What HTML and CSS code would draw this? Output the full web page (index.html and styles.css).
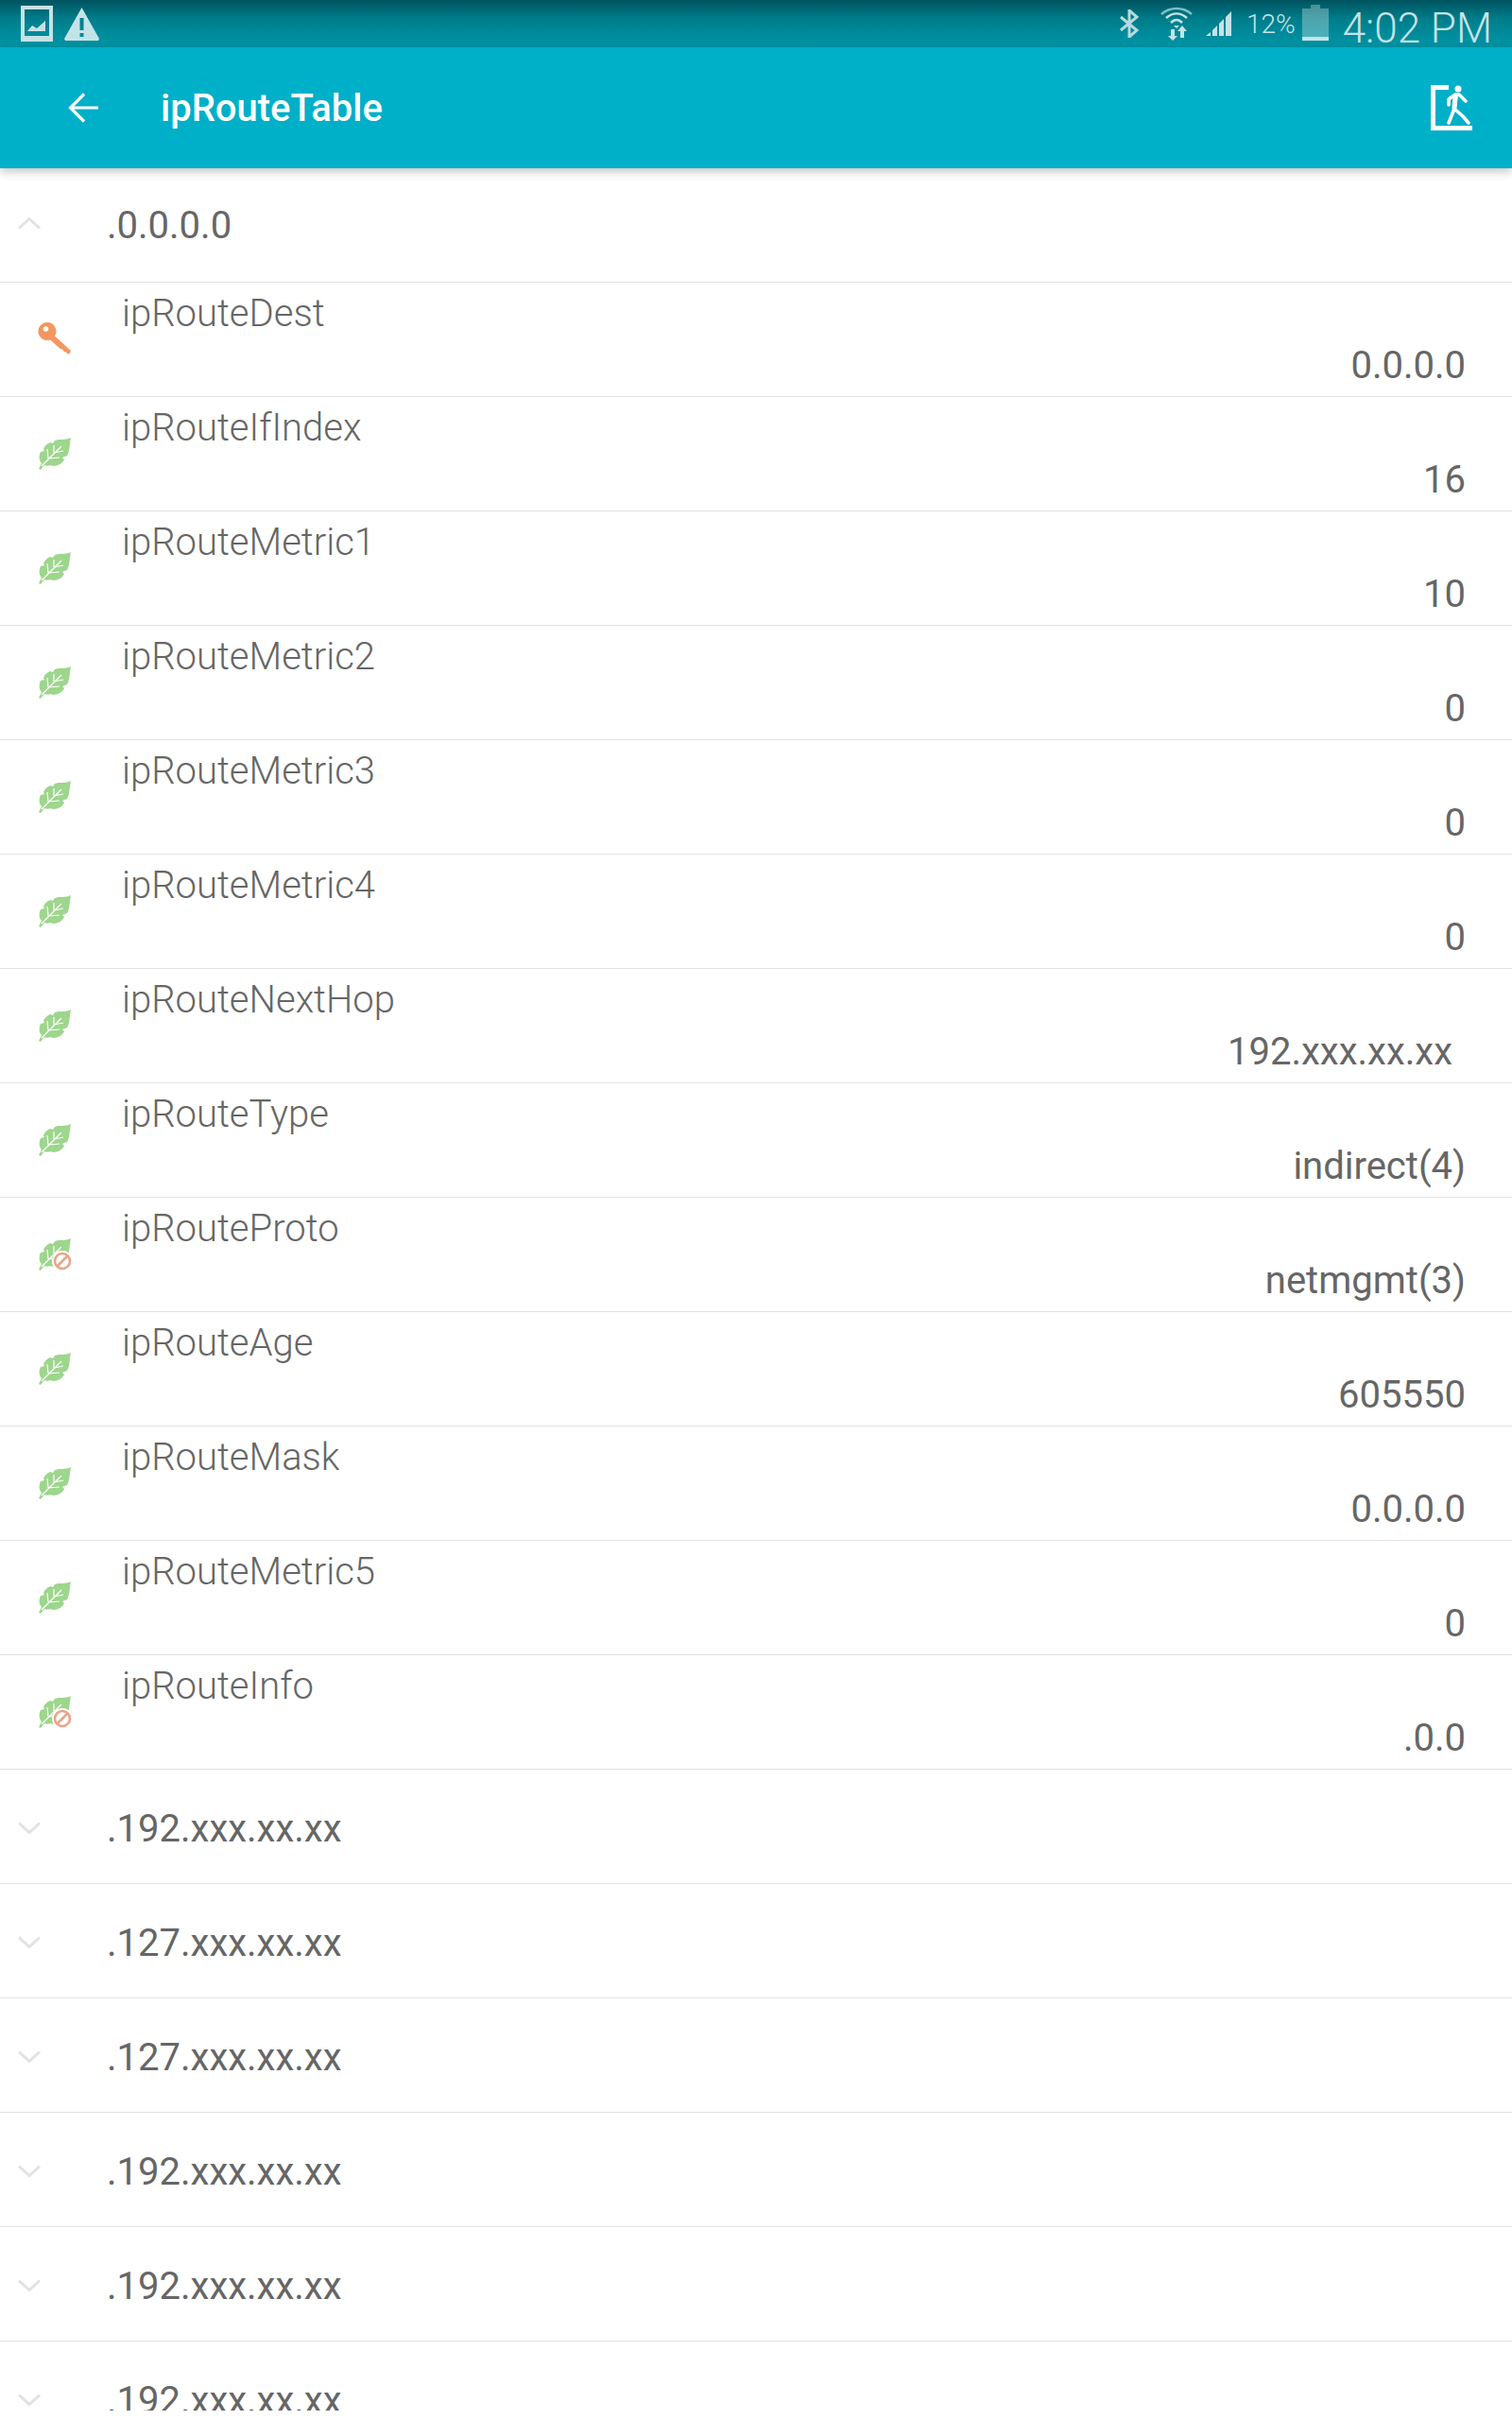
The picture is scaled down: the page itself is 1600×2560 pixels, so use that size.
FILE: index.html
```html
<!DOCTYPE html>
<html lang="en">
<head>
<meta charset="UTF-8">
<meta name="viewport" content="width=device-width, initial-scale=1.0">
<title>ipRouteTable</title>
<link rel="stylesheet" href="styles.css">
</head>
<body>

<!-- Shared icons -->
<svg class="sprites" width="0" height="0">
  <symbol id="leaf" viewBox="0 0 36 36">
    <path fill="#9dd68c" d="M35 1C29 4 23 2 18 4L16 7L13 6C9 8 7 10 6 13L7 15L3 16C1 20 1 25 4 28L1 34L3 35L7 30C10 32 14 29 16 31C22 31 26 28 28 24L26 22L31 20C34 15 33 11 35 1Z"/>
    <path fill="none" stroke="#fff" stroke-width="1.2" d="M4 31L25 10M11 23L10 13M11 23L23 22M17 17L17 9M17 17L27 15"/>
  </symbol>
  <symbol id="leaf-off" viewBox="0 0 36 36">
    <use href="#leaf" width="36" height="36"/>
    <circle cx="26" cy="25" r="11" fill="#fff"/>
    <circle cx="26" cy="25" r="8" fill="none" stroke="#e8a48c" stroke-width="2.6"/>
    <path stroke="#e8a48c" stroke-width="2.6" d="M20.5 30.5L31.5 19.5"/>
  </symbol>
  <symbol id="key" viewBox="0 0 36 36">
    <path fill="#f4965f" d="M10 0a9.500 9.500 0 0 1 8 14.500L35 30L33.500 33.500L31 33L30 31.500L28 31L26 28.500L24 28L13 18.500A9.500 9.500 0 1 1 10 0Z"/>
    <circle cx="8.500" cy="7" r="2.800" fill="#fff"/>
  </symbol>
  <symbol id="chev-down" viewBox="0 0 24 14">
    <path fill="none" stroke="#e2e2e2" stroke-width="3" d="M1 1.500L12 11.500L23 1.500"/>
  </symbol>
  <symbol id="chev-up" viewBox="0 0 24 14">
    <path fill="none" stroke="#e2e2e2" stroke-width="3" d="M1 12.500L12 2.500L23 12.500"/>
  </symbol>
</svg>

<!-- Status bar -->
<div class="status-bar">
  <svg class="st-image" viewBox="0 0 34 38">
    <path fill="#c4e3e7" fill-rule="evenodd" d="M0 0H34V38H0ZM4 4V32H30V4Z"/>
    <path fill="#c4e3e7" d="M7 27L12 21L17 24L26 16V27Z"/>
  </svg>
  <svg class="st-warn" viewBox="0 0 37 35">
    <path fill="#c4e3e7" fill-rule="evenodd" d="M18.500 0L37 33L36 35H1L0 33ZM16.500 11V24H20.500V11ZM16.500 27V31H20.500V27Z"/>
  </svg>
  <div class="status-right">
    <svg class="st-bt" viewBox="0 0 20 30">
      <path fill="none" stroke="#b5dade" stroke-width="3" d="M1 8L18 22L10 29V1L18 8L1 22"/>
    </svg>
    <svg class="st-wifi" viewBox="0 0 34 36">
      <path fill="none" stroke="#7cc0c8" stroke-width="2.500" d="M1 8C10 0 24 0 33 8"/>
      <path fill="none" stroke="#c4e3e7" stroke-width="2.500" d="M6 12C13 6 21 6 28 12M11 17C15 13 19 13 23 17"/>
      <path fill="#c4e3e7" d="M14 20H20L17 23ZM11 24H15V31H18L13 36L8 31H11ZM23 20L28 26H25V33H21V26H18Z"/>
    </svg>
    <svg class="st-signal" viewBox="0 0 27 26">
      <path fill="#c4e3e7" d="M0 26L5 22V26ZM7 26V20L12 15V26ZM14 26V13L19 8V26ZM21 26V6L27 0V26Z"/>
    </svg>
    <span class="st-batt-text">12%</span>
    <div class="st-battery"><div class="st-cap"></div><div class="st-cell"></div></div>
    <span class="st-time">4:02 PM</span>
  </div>
</div>

<!-- Toolbar -->
<div class="toolbar">
  <svg class="back-icon" viewBox="0 0 32 32">
    <path fill="none" stroke="#fff" stroke-width="3.200" d="M32 16H3M17 1.500L2.500 16L17 30.500"/>
  </svg>
  <span class="title">ipRouteTable</span>
  <svg class="exit-icon" viewBox="0 0 44 48">
    <path fill="#fff" d="M0 0H19V5H5V43H44V48H0Z"/>
    <circle cx="29" cy="4" r="3.500" fill="#fff"/>
    <path fill="none" stroke="#fff" stroke-width="3.600" stroke-linecap="round" stroke-linejoin="round" d="M19 21V15L26 10H30L37 17M27 12L25 25L34 33L40 40M25 25L19 40"/>
    <path fill="none" stroke="#fff" stroke-width="5" stroke-linecap="round" d="M26 13L25 24"/>
  </svg>
</div>

<!-- Route list -->
<div class="list">
  <div class="group group-open">
    <svg class="chev"><use href="#chev-up"/></svg>
    <span class="group-name">.0.0.0.0</span>
  </div>

  <div class="row">
    <svg class="row-icon"><use href="#key"/></svg>
    <div class="cell"><div class="label">ipRouteDest</div><div class="value">0.0.0.0</div></div>
  </div>
  <div class="row">
    <svg class="row-icon"><use href="#leaf"/></svg>
    <div class="cell"><div class="label">ipRouteIfIndex</div><div class="value">16</div></div>
  </div>
  <div class="row">
    <svg class="row-icon"><use href="#leaf"/></svg>
    <div class="cell"><div class="label">ipRouteMetric1</div><div class="value">10</div></div>
  </div>
  <div class="row">
    <svg class="row-icon"><use href="#leaf"/></svg>
    <div class="cell"><div class="label">ipRouteMetric2</div><div class="value">0</div></div>
  </div>
  <div class="row">
    <svg class="row-icon"><use href="#leaf"/></svg>
    <div class="cell"><div class="label">ipRouteMetric3</div><div class="value">0</div></div>
  </div>
  <div class="row">
    <svg class="row-icon"><use href="#leaf"/></svg>
    <div class="cell"><div class="label">ipRouteMetric4</div><div class="value">0</div></div>
  </div>
  <div class="row">
    <svg class="row-icon"><use href="#leaf"/></svg>
    <div class="cell"><div class="label">ipRouteNextHop</div><div class="value value-masked">192.xxx.xx.xx</div></div>
  </div>
  <div class="row">
    <svg class="row-icon"><use href="#leaf"/></svg>
    <div class="cell"><div class="label">ipRouteType</div><div class="value">indirect(4)</div></div>
  </div>
  <div class="row">
    <svg class="row-icon"><use href="#leaf-off"/></svg>
    <div class="cell"><div class="label">ipRouteProto</div><div class="value">netmgmt(3)</div></div>
  </div>
  <div class="row">
    <svg class="row-icon"><use href="#leaf"/></svg>
    <div class="cell"><div class="label">ipRouteAge</div><div class="value">605550</div></div>
  </div>
  <div class="row">
    <svg class="row-icon"><use href="#leaf"/></svg>
    <div class="cell"><div class="label">ipRouteMask</div><div class="value">0.0.0.0</div></div>
  </div>
  <div class="row">
    <svg class="row-icon"><use href="#leaf"/></svg>
    <div class="cell"><div class="label">ipRouteMetric5</div><div class="value">0</div></div>
  </div>
  <div class="row">
    <svg class="row-icon"><use href="#leaf-off"/></svg>
    <div class="cell"><div class="label">ipRouteInfo</div><div class="value">.0.0</div></div>
  </div>

  <div class="group">
    <svg class="chev"><use href="#chev-down"/></svg>
    <span class="group-name">.192.xxx.xx.xx</span>
  </div>
  <div class="group">
    <svg class="chev"><use href="#chev-down"/></svg>
    <span class="group-name">.127.xxx.xx.xx</span>
  </div>
  <div class="group">
    <svg class="chev"><use href="#chev-down"/></svg>
    <span class="group-name">.127.xxx.xx.xx</span>
  </div>
  <div class="group">
    <svg class="chev"><use href="#chev-down"/></svg>
    <span class="group-name">.192.xxx.xx.xx</span>
  </div>
  <div class="group">
    <svg class="chev"><use href="#chev-down"/></svg>
    <span class="group-name">.192.xxx.xx.xx</span>
  </div>
  <div class="group">
    <svg class="chev"><use href="#chev-down"/></svg>
    <span class="group-name">.192.xxx.xx.xx</span>
  </div>
</div>

</body>
</html>
```

FILE: styles.css
```css
html, body {
  height: 2560px;
  margin: 0;
  overflow: hidden;
  background-color: #fff;
  font-family: Roboto, "Noto Sans", sans-serif;
  color: #666;
}

.sprites {
  display: block;
  height: 0;
}

/* Status bar */
.status-bar {
  display: flex;
  align-items: flex-start;
  height: 50px;
  overflow: hidden;
  background: linear-gradient(to bottom, #00535f 0%, #007d8b 40%, #0097a8 100%);
}

.st-image {
  width: 34px;
  height: 38px;
  margin: 6px 0 0 22px;
}

.st-warn {
  width: 37px;
  height: 35px;
  margin: 8px 0 0 12px;
}

.status-right {
  display: flex;
  align-items: flex-start;
  margin-left: auto;
  color: #c4e3e7;
}

.st-bt {
  width: 20px;
  height: 30px;
  margin: 10px 0 0 0;
}

.st-wifi {
  width: 34px;
  height: 36px;
  margin: 7px 0 0 23px;
}

.st-signal {
  width: 27px;
  height: 26px;
  margin: 12px 0 0 14px;
}

.st-batt-text {
  margin: 9px 0 0 16px;
  font-size: 28px;
  font-weight: 300;
  line-height: 33px;
}

.st-battery {
  display: flex;
  flex-direction: column;
  align-items: center;
  margin: 5px 0 0 7px;
}

.st-cap {
  width: 10px;
  height: 4px;
  background-color: rgba(255, 255, 255, 0.3);
}

.st-cell {
  width: 28px;
  height: 34px;
  box-sizing: border-box;
  border-bottom: 4px solid #c4e3e7;
  background-color: rgba(255, 255, 255, 0.3);
}

.st-time {
  margin: 4px 21px 0 15px;
  font-size: 44px;
  font-weight: 300;
  line-height: 52px;
  white-space: nowrap;
}

/* Toolbar */
.toolbar {
  position: relative;
  z-index: 1;
  display: flex;
  align-items: center;
  height: 128px;
  background-color: #00afc8;
  box-shadow: 0 3px 10px rgba(0, 0, 0, 0.25);
}

.back-icon {
  width: 32px;
  height: 32px;
  margin-left: 72px;
}

.title {
  margin-left: 66px;
  color: #fff;
  font-size: 40px;
  font-weight: 500;
}

.exit-icon {
  width: 44px;
  height: 48px;
  margin: 0 42px 0 auto;
}

/* List */
.list {
  height: 2372px;
  overflow: hidden;
}

.group {
  display: flex;
  align-items: flex-start;
  box-sizing: border-box;
  height: 121px;
  padding-top: 38px;
  border-bottom: 1px solid #e2e2e2;
}

.group-open {
  padding-top: 36px;
}

.chev {
  width: 24px;
  height: 14px;
  margin: 17px 0 0 19px;
}

.group-open .chev {
  margin-top: 15px;
}

.group-name {
  margin-left: 70px;
  font-size: 40px;
  line-height: 50px;
}

.row {
  display: flex;
  align-items: center;
  box-sizing: border-box;
  height: 121px;
  border-bottom: 1px solid #e2e2e2;
}

.row-icon {
  width: 36px;
  height: 36px;
  margin-left: 40px;
}

.cell {
  flex: 1;
  align-self: flex-start;
  margin-left: 53px;
  padding: 8px 49px 0 0;
}

.label {
  font-size: 40px;
  font-weight: 300;
  line-height: 50px;
}

.value {
  margin-top: 5px;
  font-size: 40px;
  line-height: 50px;
  text-align: right;
}

/* masked address has a trailing space in the app */
.value-masked {
  padding-right: 14px;
}
```
